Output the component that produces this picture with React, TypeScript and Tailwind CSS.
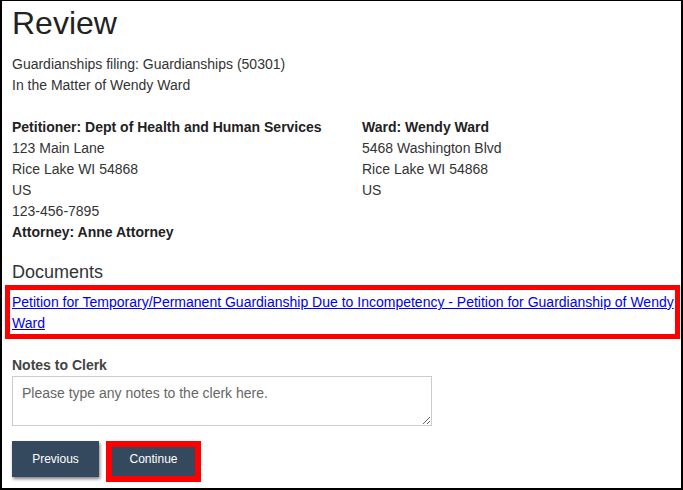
import React from "react";

export default function App() {
  return (
    <div
      className="w-[683px] h-[490px] bg-white border-black border-l-2 border-r-2 border-t border-b-2 overflow-hidden text-[14px] text-[#333]"
      style={{ fontFamily: '"Liberation Sans", Arial, sans-serif' }}
    >
      <div className="pl-[10px] pr-[1px] pt-[5px]">
        <h1 className="text-[32px] leading-[35px] font-normal text-[#222]">Review</h1>
        <div className="mt-[13px] leading-[21px]">
          <div>Guardianships filing: Guardianships (50301)</div>
          <div>In the Matter of Wendy Ward</div>
        </div>
        <div className="mt-[21px] flex leading-[21px]">
          <div className="w-[350px]">
            <div className="font-bold text-[#222]">Petitioner: Dept of Health and Human Services</div>
            <div>123 Main Lane</div>
            <div>Rice Lake WI 54868</div>
            <div>US</div>
            <div>123-456-7895</div>
            <div className="font-bold text-[#222]">Attorney: Anne Attorney</div>
          </div>
          <div>
            <div className="font-bold text-[#222]">Ward: Wendy Ward</div>
            <div>5468 Washington Blvd</div>
            <div>Rice Lake WI 54868</div>
            <div>US</div>
          </div>
        </div>
        <h2 className="mt-[19px] text-[18px] leading-[20px] font-normal text-[#333]">Documents</h2>
        <div className="-ml-[7px] mt-[3px] border-[5px] border-[#ff0000] pl-[2px] pr-0 pt-[2px] leading-[21px]">
          <a href="#" className="text-[#0000ee] underline">
            Petition for Temporary/Permanent Guardianship Due to Incompetency - Petition for Guardianship of Wendy Ward
          </a>
        </div>
        <div className="mt-[16px] font-bold text-[#444] leading-[20px]">Notes to Clerk</div>
        <textarea
          className="mt-[1px] block w-[420px] h-[50px] border border-[#ccc] px-[9px] py-[6px] text-[14px] leading-[20px] placeholder:text-[#666] resize-y"
          placeholder="Please type any notes to the clerk here."
          style={{ fontFamily: '"Liberation Sans", Arial, sans-serif' }}
        />
        <div className="mt-[15px] flex items-start gap-[7px]">
          <button className="w-[87px] h-[36px] bg-[#34495e] text-white text-[12px] shadow-[1px_2px_3px_rgba(0,0,0,0.5)]">
            Previous
          </button>
          <div className="border-[6px] border-[#ff0000]">
            <button className="block w-[83px] h-[29px] pb-[5px] bg-[#34495e] text-white text-[12px]">Continue</button>
          </div>
        </div>
      </div>
    </div>
  );
}
